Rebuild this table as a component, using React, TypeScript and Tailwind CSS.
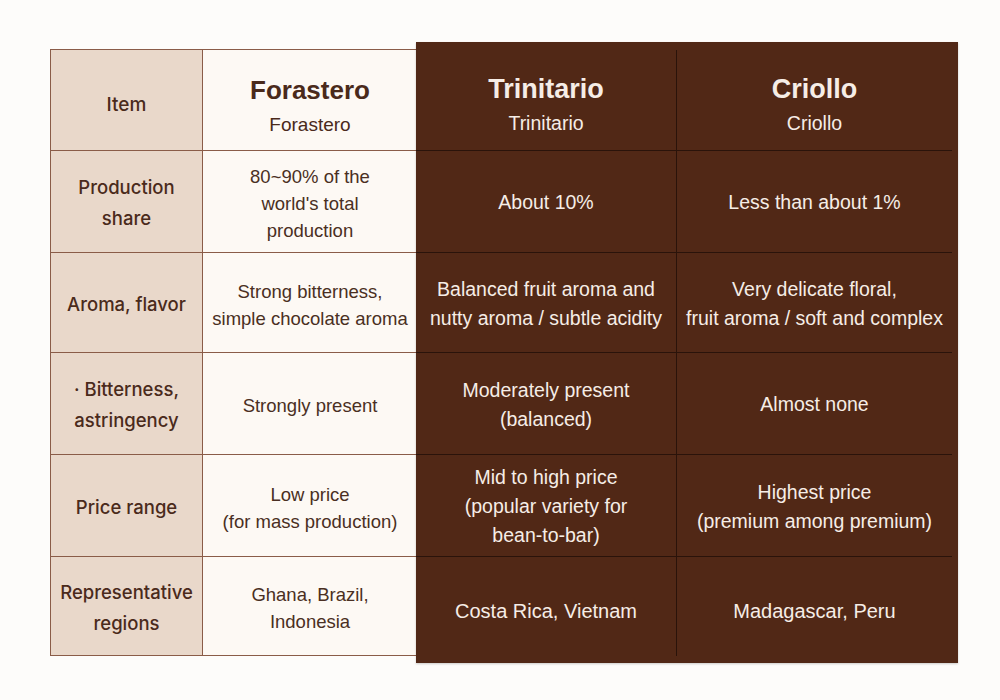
import React from "react";

const rows = [
  {
    h: 102,
    item: ["Production", "share"],
    f: ["80~90% of the", "world's total", "production"],
    t: ["About 10%"],
    c: ["Less than about 1%"],
  },
  {
    h: 100,
    item: ["Aroma, flavor"],
    f: ["Strong bitterness,", "simple chocolate aroma"],
    t: ["Balanced fruit aroma and", "nutty aroma / subtle acidity"],
    c: ["Very delicate floral,", "fruit aroma / soft and complex"],
  },
  {
    h: 102,
    item: ["· Bitterness,", "astringency"],
    f: ["Strongly present"],
    t: ["Moderately present", "(balanced)"],
    c: ["Almost none"],
  },
  {
    h: 102,
    item: ["Price range"],
    f: ["Low price", "(for mass production)"],
    t: ["Mid to high price", "(popular variety for", "bean-to-bar)"],
    c: ["Highest price", "(premium among premium)"],
  },
  {
    h: 99,
    item: ["Representative", "regions"],
    f: ["Ghana, Brazil,", "Indonesia"],
    t: ["Costa Rica, Vietnam"],
    c: ["Madagascar, Peru"],
  },
];

function Lines({ lines }: { lines: string[] }) {
  return (
    <>
      {lines.map((l, i) => (
        <span key={i} className="block whitespace-nowrap">
          {l}
        </span>
      ))}
    </>
  );
}

export default function App() {
  return (
    <div
      className="h-[700px] w-[1000px] bg-[#fdfcfa] pl-[50px] pt-[42px]"
      style={{ fontFamily: '"Liberation Sans", Arial, sans-serif' }}
    >
      <div className="flex items-start">
        {/* light part */}
        <div className="mt-[7px] grid w-[366px] grid-cols-[152px_214px] border-l border-t border-[#8a5c48]">
          <div className="flex h-[101px] items-center justify-center border-b border-r border-[#8a5c48] bg-[#e9d8ca] pt-[10px] font-['Inter'] text-[19px] font-medium text-[#4a2a1b]">
            Item
          </div>
          <div className="flex h-[101px] flex-col items-center justify-center border-b border-[#8a5c48] bg-[#fdf9f4] pt-[12px] text-[#4a2a1b]">
            <span className="text-[26px] font-bold leading-[30px]">Forastero</span>
            <span className="mt-[7px] text-[19px] leading-[26px]">Forastero</span>
          </div>
          {rows.map((r, i) => (
            <React.Fragment key={i}>
              <div
                className="flex flex-col items-center justify-center border-b border-r border-[#8a5c48] bg-[#e9d8ca] pt-[3px] text-center font-['Inter'] text-[18.5px] font-medium leading-[31px] text-[#4a2a1b]"
                style={{ height: r.h }}
              >
                <Lines lines={r.item} />
              </div>
              <div
                className="flex flex-col items-center justify-center border-b border-[#8a5c48] bg-[#fdf9f4] pt-[4px] text-center text-[18.5px] leading-[27px] text-[#4a2f22]"
                style={{ height: r.h }}
              >
                <Lines lines={r.f} />
              </div>
            </React.Fragment>
          ))}
        </div>

        {/* dark part */}
        <div className="w-[542px] bg-[#512816] pb-[7px] pr-[6px] pt-[8px] text-[#f6ede6] shadow-[0_1px_2px_rgba(0,0,0,0.2)]">
          <div className="grid grid-cols-[261px_275px]">
            <div className="flex h-[101px] flex-col items-center justify-center border-b border-r border-[#2a130a] pt-[10px]">
              <span className="text-[27px] font-bold leading-[30px]">Trinitario</span>
              <span className="mt-[6px] text-[19.5px] leading-[26px]">Trinitario</span>
            </div>
            <div className="flex h-[101px] flex-col items-center justify-center border-b border-[#2a130a] pt-[10px]">
              <span className="text-[27px] font-bold leading-[30px]">Criollo</span>
              <span className="mt-[6px] text-[19.5px] leading-[26px]">Criollo</span>
            </div>
            {rows.map((r, i) => {
              const last = i === rows.length - 1;
              return (
                <React.Fragment key={i}>
                  <div
                    className={
                      last
                        ? "flex flex-col items-center justify-center border-r border-[#2a130a] pt-[9px] text-center text-[20px] leading-[29px]"
                        : "flex flex-col items-center justify-center border-b border-r border-[#2a130a] pt-[2px] text-center text-[19.5px] leading-[29px]"
                    }
                    style={{ height: r.h }}
                  >
                    <Lines lines={r.t} />
                  </div>
                  <div
                    className={
                      last
                        ? "flex flex-col items-center justify-center pt-[9px] text-center text-[20px] leading-[29px]"
                        : "flex flex-col items-center justify-center border-b border-[#2a130a] pt-[2px] text-center text-[19.5px] leading-[29px]"
                    }
                    style={{ height: r.h }}
                  >
                    <Lines lines={r.c} />
                  </div>
                </React.Fragment>
              );
            })}
          </div>
        </div>
      </div>
    </div>
  );
}
